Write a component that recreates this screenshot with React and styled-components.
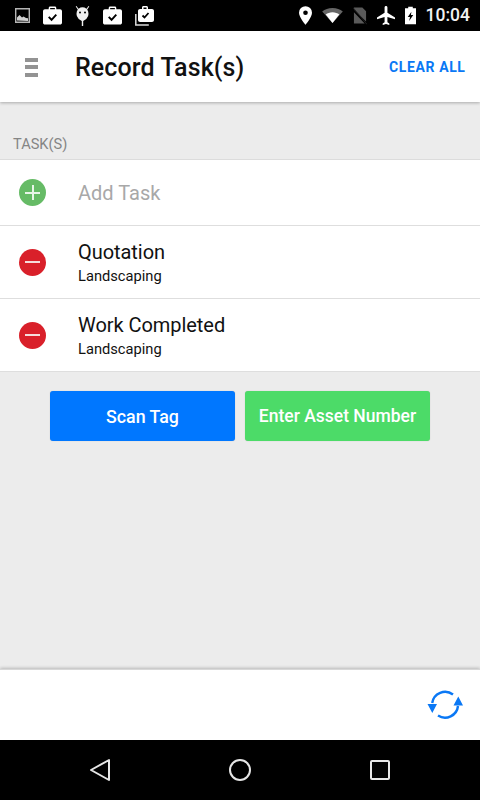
import React from "react";
import styled, { createGlobalStyle } from "styled-components";

const Global = createGlobalStyle`
  html, body { margin: 0; padding: 0; background: #ececec; }
  * { box-sizing: border-box; }
  body { font-family: Roboto, "Liberation Sans", sans-serif; }
`;
const Screen = styled.div`
  width: 480px; height: 800px; display: flex; flex-direction: column;
  background: #ececec; overflow: hidden;
`;
const StatusBar = styled.div`
  height: 31px; flex: none; background: #000; display: flex; align-items: center;
  justify-content: space-between; padding: 0 10px 0 15px; color: #fff;
`;
const StatusGroup = styled.div`
  display: flex; align-items: center; gap: ${p => p.$gap}px;
`;
const StackSlot = styled.span`
  display: flex; margin-left: -2px;
`;
const Clock = styled.span`
  font-size: 17.5px; font-weight: 500; color: #f2f2f2; line-height: 1;
`;
const Header = styled.header`
  height: 71px; flex: none; background: #fff; display: flex; align-items: center;
  padding: 0 15px 0 25px; box-shadow: 0 1px 3px rgba(0,0,0,.28); position: relative;
`;
const Burger = styled.div`
  width: 13px; display: flex; flex-direction: column; gap: 3.5px; margin: 1px 37px 0 0;
  span { display: block; height: 4px; background: #939393; }
`;
const Title = styled.h1`
  flex: 1; margin: 0; font-size: 25px; font-weight: 500; color: #111; line-height: 1;
  letter-spacing: .1px; padding-top: 1px;
`;
const ClearAll = styled.button`
  border: 0; background: none; padding: 0; color: #0a78f5; font: 700 14px Roboto, sans-serif;
  letter-spacing: .6px; margin-right: -.5px;
`;
const SectionLabel = styled.div`
  height: 58px; flex: none; padding: 0 13px 6px; display: flex; align-items: flex-end;
  font-size: 14.6px; color: #858585; border-bottom: 1px solid #dcdcdc;
`;
const List = styled.div`
  background: #fff; flex: none;
`;
const Row = styled.div`
  height: ${p => p.$h}px; display: flex; align-items: center; padding-left: 19px;
  border-bottom: 1px solid #dedede;
`;
const RoundIcon = styled.div`
  width: 27px; height: 27px; border-radius: 50%; background: ${p => p.$bg}; position: relative;
  flex: none; margin-right: 32px;
  &::before { content: ""; position: absolute; left: 6px; top: 12.5px; width: 15px; height: 2px;
    background: ${p => p.$line}; }
  ${p => p.$plus && `&::after { content: ""; position: absolute; left: 12.5px; top: 6px; width: 2px; height: 15px; background: ${p.$line}; }`}
`;
const Placeholder = styled.span`
  font-size: 20px; color: #a8a8a8;
`;
const TaskText = styled.div`
  display: flex; flex-direction: column; gap: 4px;
`;
const TaskName = styled.span`
  font-size: 20px; color: #111; line-height: 24px; letter-spacing: -.05px;
`;
const TaskSub = styled.span`
  font-size: 14.7px; color: #111; line-height: 17px;
`;
const Buttons = styled.div`
  display: flex; justify-content: center; gap: 10px; padding-top: 19px; flex: 1;
`;
const ActionButton = styled.button`
  width: 185px; height: 50px; border: 0; border-radius: 3px; background: ${p => p.$bg};
  color: #fff; font: 500 ${p => p.$size}px Roboto, sans-serif; padding: 0;
  box-shadow: 0 0 1px rgba(0,0,0,.25);
`;
const Footer = styled.footer`
  height: 71px; flex: none; background: #fff; display: flex; align-items: center;
  justify-content: flex-end; padding: 0 17px 0 0; box-shadow: 0 -1px 3px rgba(0,0,0,.22);
  border-top: 1px solid #d8d8d8;
`;
const NavBar = styled.nav`
  height: 60px; flex: none; background: #000; display: flex; align-items: center;
  justify-content: space-between; padding: 0 90px 0 89px;
`;

const Case = () => (
  <svg width="19" height="19" viewBox="0 0 20 19">
    <path fill="#fff" fillRule="evenodd" d="M6 3V1.500C6 .7 6.700 0 7.500 0h5c.8 0 1.500.7 1.500 1.500V3h4c1 0 2 .9 2 2v12c0 1.100-1 2-2 2H2c-1.100 0-2-.9-2-2V5c0-1.100 1-2 2-2zM7.500 1.500V3h5V1.500z" />
    <path fill="none" stroke="#000" strokeWidth="2" d="M6 11l3 3 5-5.500" />
  </svg>
);
const Picture = () => (
  <svg width="15" height="15" viewBox="0 0 15 15">
    <path fill="none" stroke="#b5b5b5" strokeWidth="1.400" d="M.7.700h13.600v13.600H.7z" />
    <path fill="#d0d0d0" d="M2 12.500v-3L4.500 7l2.500 2.500 1.500-1 2.500 1.500 2 .3v2.700z" />
  </svg>
);
const Bug = () => (
  <svg width="15" height="20" viewBox="0 0 15 20">
    <path fill="#f0f0f0" d="M1.500 0l2 2.700A7 7 0 0 1 11.500 2.700l2-2.700.8.6-2.100 3A7.500 7.500 0 0 1 8.200 14.900V20H6.800v-5.100A7.500 7.500 0 0 1 2.800 3.600L.7.600z" />
    <circle cx="5" cy="6.500" r="1" fill="#000" />
    <circle cx="10" cy="6.500" r="1" fill="#000" />
  </svg>
);
const Stack = () => (
  <svg width="21" height="20" viewBox="-2 0 21 20">
    <path fill="none" stroke="#dcdcdc" strokeWidth="1.500" d="M.8 8v11h13" />
    <path fill="#fff" fillRule="evenodd" d="M7 3V1.500C7 .7 7.600 0 8.500 0h3c.8 0 1.500.7 1.500 1.500V3h4c1.100 0 2 .9 2 2v9c0 1.100-.9 2-2 2H5c-1.100 0-2-.9-2-2V5c0-1.100.9-2 2-2zM8.500 1.500V3h3V1.500z" />
    <path fill="none" stroke="#000" strokeWidth="1.800" d="M7.500 9.500l2 2 4-4.500" />
  </svg>
);
const Pin = () => (
  <svg width="13" height="19" viewBox="0 0 14 20">
    <path fill="#fff" fillRule="evenodd" d="M7 0a7 7 0 0 1 7 7c0 5-7 13-7 13S0 12 0 7a7 7 0 0 1 7-7zm0 4.500a2.500 2.500 0 1 0 0 5 2.500 2.500 0 0 0 0-5z" />
  </svg>
);
const Wifi = () => (
  <svg width="21" height="15" viewBox="0 0 22 16">
    <path fill="#666" d="M11 0C6.500 0 3 1.500 0 3.700L11 16 22 3.700C19 1.500 15.500 0 11 0z" />
    <path fill="#fff" d="M11 4.500c-3 0-5.300 1-7.200 2.400L11 16l7.200-9.100C16.300 5.500 14 4.500 11 4.500z" />
  </svg>
);
const NoSim = () => (
  <svg width="14" height="18" viewBox="0 0 15 18">
    <path fill="#5a5a5a" d="M1 0h9l4 4v11L1 2zM1 5l11.500 12H1z" />
    <path stroke="#222" strokeWidth="1" d="M0 0l15 18" />
  </svg>
);
const Plane = () => (
  <svg width="18" height="19" viewBox="2 2 19 20">
    <path fill="#fff" d="M21 16v-2l-8-5V3.500c0-.83-.67-1.500-1.500-1.500S10 2.670 10 3.500V9l-8 5v2l8-2.500V19l-2 1.500V22l3.500-1 3.500 1v-1.500L13 19v-5.500z" />
  </svg>
);
const Battery = () => (
  <svg width="11" height="19" viewBox="0 0 12 19">
    <path fill="#fff" fillRule="evenodd" d="M3.500 0h5v1.500H12V19H0V1.500h3.500zM7 5.500L3 11h2.500l-1 4.500L9 9H6.500z" />
  </svg>
);
const Sync = () => (
  <svg width="36" height="30" viewBox="0 0 36 30" fill="none">
    <path stroke="#0a78f5" strokeWidth="2.400" d="M5.200 13A13 13 0 0 1 26 4.500" />
    <path stroke="#0a78f5" strokeWidth="2.400" d="M31 16A13 13 0 0 1 11 25.500" />
    <path fill="#0a78f5" d="M.5 14h9.500l-4.700 9zM26.500 15.500l4.800-9 4.700 9z" />
  </svg>
);
const Back = () => (
  <svg width="21" height="24" viewBox="0 0 21 24" fill="none">
    <path stroke="#e6e6e6" strokeWidth="2" strokeLinejoin="round" d="M20 2v20L2 12z" />
  </svg>
);
const Home = () => (
  <svg width="22" height="22" viewBox="0 0 22 22" fill="none">
    <circle cx="11" cy="11" r="10" stroke="#e6e6e6" strokeWidth="2" />
  </svg>
);
const Recent = () => (
  <svg width="20" height="20" viewBox="0 0 20 20" fill="none">
    <rect x="1" y="1" width="18" height="18" rx="1" stroke="#e6e6e6" strokeWidth="2" />
  </svg>
);

export default function App() {
  return (
    <Screen>
      <Global />
      <StatusBar>
        <StatusGroup $gap={13}>
          <Picture /><Case /><Bug /><Case />
          <StackSlot><Stack /></StackSlot>
        </StatusGroup>
        <StatusGroup $gap={10}>
          <Pin /><Wifi /><NoSim /><Plane /><Battery /><Clock>10:04</Clock>
        </StatusGroup>
      </StatusBar>
      <Header>
        <Burger><span /><span /><span /></Burger>
        <Title>Record Task(s)</Title>
        <ClearAll>CLEAR ALL</ClearAll>
      </Header>
      <SectionLabel>TASK(S)</SectionLabel>
      <List>
        <Row $h={66}>
          <RoundIcon $bg="#66bb66" $line="#e8f5e8" $plus />
          <Placeholder>Add Task</Placeholder>
        </Row>
        <Row $h={73}>
          <RoundIcon $bg="#d9202a" $line="#f6dcdc" />
          <TaskText><TaskName>Quotation</TaskName><TaskSub>Landscaping</TaskSub></TaskText>
        </Row>
        <Row $h={73}>
          <RoundIcon $bg="#d9202a" $line="#f6dcdc" />
          <TaskText><TaskName>Work Completed</TaskName><TaskSub>Landscaping</TaskSub></TaskText>
        </Row>
      </List>
      <Buttons>
        <ActionButton $bg="#0077ff" $size={17.8}>Scan Tag</ActionButton>
        <ActionButton $bg="#4cdb68" $size={17.5}>Enter Asset Number</ActionButton>
      </Buttons>
      <Footer><Sync /></Footer>
      <NavBar><Back /><Home /><Recent /></NavBar>
    </Screen>
  );
}
